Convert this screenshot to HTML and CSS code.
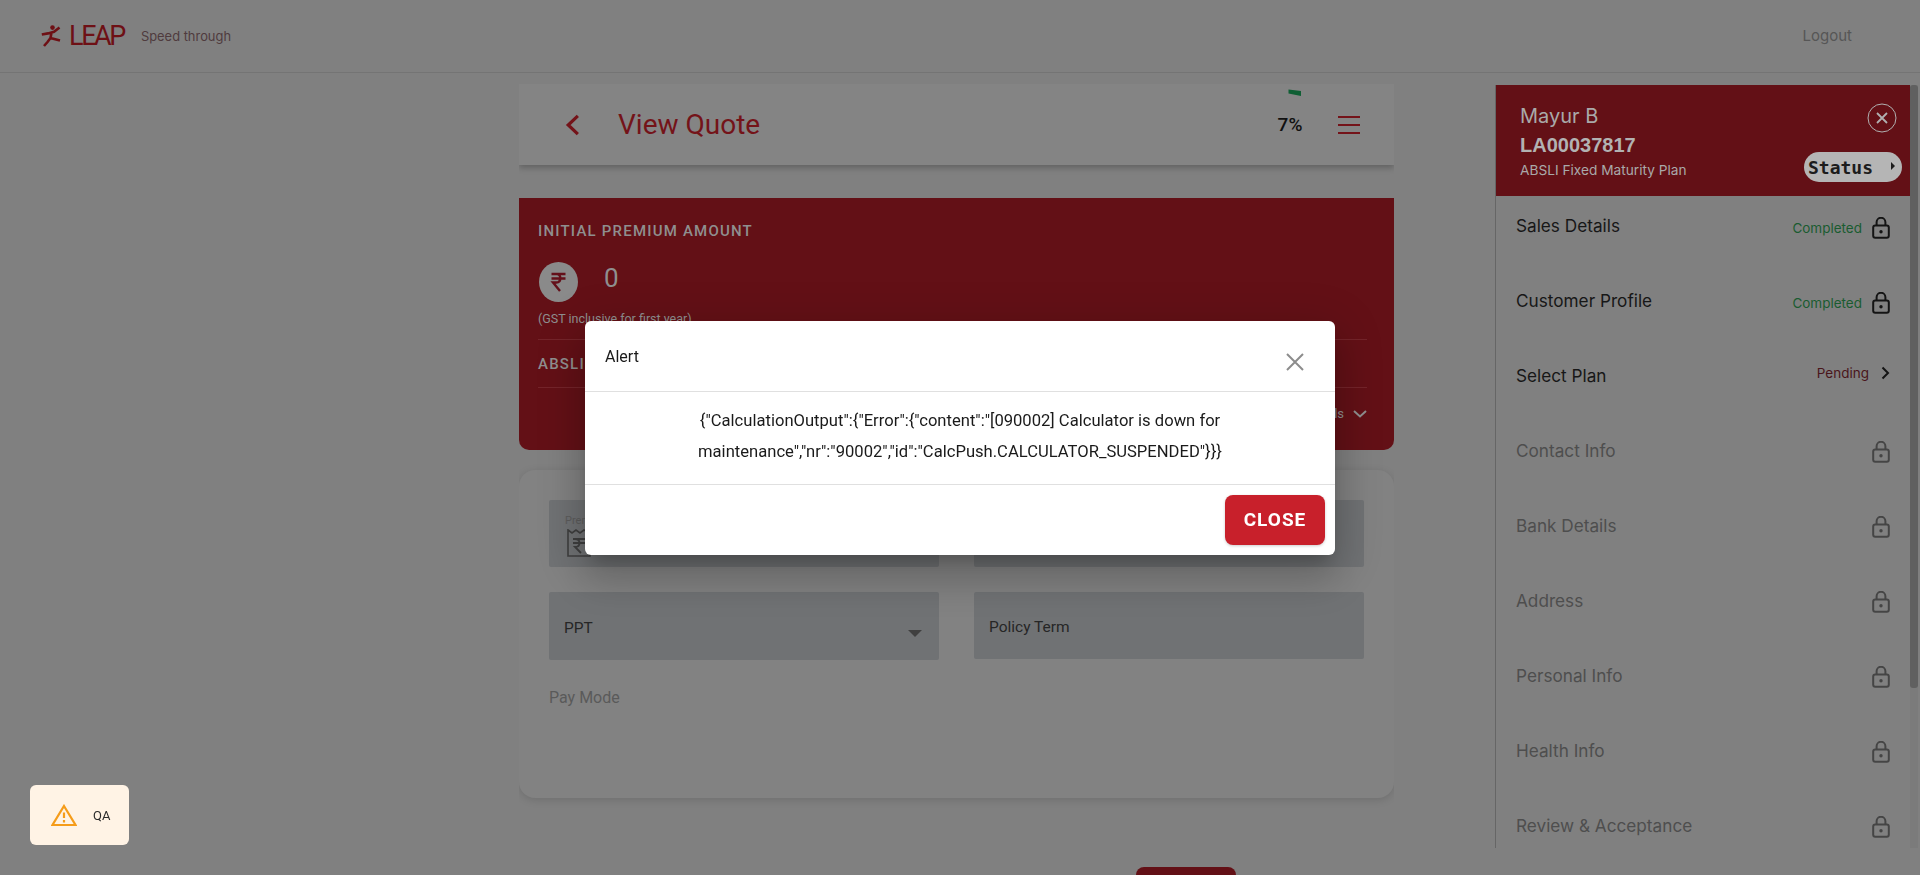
FILE: index.html
```html
<!DOCTYPE html>
<html lang="en">
<head>
  <meta charset="UTF-8" />
  <meta name="viewport" content="width=device-width, initial-scale=1" />
  <title>LEAP - View Quote</title>
  <link rel="stylesheet" href="styles.css">
</head>
<body>
  <svg class="defs" width="0" height="0">
    <symbol id="lock" viewBox="0 0 18 22">
      <rect x="1.2" y="8.6" width="15.6" height="12.2" rx="2" fill="none" stroke="currentColor" stroke-width="2"/>
      <path d="M4.6 8.6V5.2a4.4 4.4 0 0 1 8.8 0v3.4" fill="none" stroke="currentColor" stroke-width="2"/>
      <circle cx="9" cy="14.8" r="1.7" fill="currentColor"/>
    </symbol>
  </svg>

  <header class="topbar">
    <div class="brand">
      <svg class="brand-icon" viewBox="0 0 20 22" width="20" height="22">
        <circle cx="11.5" cy="2.6" r="2.3" fill="#6e1015"/>
        <path d="M0.8 9.5 L7 8.4 L13 6.8 L18.5 2.5 M10.5 7.5 L9.5 13 L19 15.5 M9.5 13 L6.5 17 L3 21" fill="none" stroke="#6e1015" stroke-width="2.6"/>
      </svg>
      <span class="brand-name">LEAP</span>
      <span class="brand-tag">Speed through</span>
    </div>
    <span class="logout">Logout</span>
  </header>

  <div class="workspace">
    <main class="content">
      <section class="quote-head">
        <svg class="back" viewBox="0 0 14 20" width="15" height="22">
          <path d="M12 1.5 L3 10 L12 18.5" fill="none" stroke="#741319" stroke-width="3"/>
        </svg>
        <h1 class="quote-title">View Quote</h1>
        <div class="progress">
          <svg class="progress-arc" viewBox="0 0 14 8" width="14" height="8">
            <path d="M0.5 0.5 L13 2 L13 7 L0.5 4.5 Z" fill="#0f5f34"/>
          </svg>
          <span class="progress-value">7%</span>
        </div>
        <div class="menu"><span></span><span></span><span></span></div>
      </section>

      <section class="premium">
        <div class="premium-label">INITIAL PREMIUM AMOUNT</div>
        <div class="premium-amount">
          <div class="rupee">
            <svg viewBox="0 0 16 20" width="17" height="20">
              <path d="M1 2 H15 M1 6.5 H15 M3 2 H6.5 C11 2 11 10.5 6 10.5 H2.5 L9.5 19" fill="none" stroke="#64101a" stroke-width="2.4"/>
            </svg>
          </div>
          <span class="premium-value">0</span>
        </div>
        <div class="premium-note">(GST inclusive for first year)</div>
        <div class="premium-plan">ABSLI</div>
        <div class="premium-more">
          <span>View Details</span>
          <svg viewBox="0 0 14 8" width="14" height="8">
            <path d="M1 1 L7 6.5 L13 1" fill="none" stroke="#8f8f8f" stroke-width="2"/>
          </svg>
        </div>
      </section>

      <section class="form-card">
        <div class="field-row">
          <div class="field field-premium">
            <span class="field-mini">Premium</span>
            <svg class="receipt" viewBox="0 0 24 28" width="24" height="28">
              <path d="M1 1 L5 4 L9 1 L13 4 L17 1 L23 4 V27 H1 Z" fill="none" stroke="#3f3f3f" stroke-width="1.6"/>
              <path d="M6 10 H18 M6 14 H18 M8 10 C14 10 14 18 8 18 L14 24" fill="none" stroke="#3f3f3f" stroke-width="1.8"/>
            </svg>
          </div>
          <div class="field"></div>
        </div>
        <div class="field-row">
          <div class="field field-select">
            <span class="field-label">PPT</span>
            <span class="caret"></span>
          </div>
          <div class="field field-term">
            <span class="field-label">Policy Term</span>
          </div>
        </div>
        <div class="pay-mode">Pay Mode</div>
      </section>

      <button class="submit" type="button"></button>
    </main>

    <aside class="sidebar">
      <div class="side-main">
        <div class="lead">
          <div class="lead-name">Mayur B</div>
          <div class="lead-id">LA00037817</div>
          <div class="lead-plan">ABSLI Fixed Maturity Plan</div>
          <svg class="lead-close" viewBox="0 0 30 30" width="30" height="30">
            <circle cx="15" cy="15" r="14" fill="none" stroke="#b0b0b0" stroke-width="1"/>
            <path d="M10 10 L20 20 M20 10 L10 20" fill="none" stroke="#b0b0b0" stroke-width="1.8"/>
          </svg>
          <div class="status-pill">
            <span>Status</span>
            <i class="status-arrow"></i>
          </div>
        </div>
        <ul class="steps">
          <li class="step">
            <span class="step-name">Sales Details</span>
            <span class="step-state done">Completed
              <svg class="lock" width="18" height="22"><use href="#lock"/></svg>
            </span>
          </li>
          <li class="step">
            <span class="step-name">Customer Profile</span>
            <span class="step-state done">Completed
              <svg class="lock" width="18" height="22"><use href="#lock"/></svg>
            </span>
          </li>
          <li class="step">
            <span class="step-name">Select Plan</span>
            <span class="step-state pending">Pending
              <svg class="chevron" viewBox="0 0 9 14" width="9" height="14">
                <path d="M1.5 1.5 L7 7 L1.5 12.5" fill="none" stroke="#141414" stroke-width="2"/>
              </svg>
            </span>
          </li>
          <li class="step locked">
            <span class="step-name">Contact Info</span>
            <span class="step-state"><svg class="lock" width="18" height="22"><use href="#lock"/></svg></span>
          </li>
          <li class="step locked">
            <span class="step-name">Bank Details</span>
            <span class="step-state"><svg class="lock" width="18" height="22"><use href="#lock"/></svg></span>
          </li>
          <li class="step locked">
            <span class="step-name">Address</span>
            <span class="step-state"><svg class="lock" width="18" height="22"><use href="#lock"/></svg></span>
          </li>
          <li class="step locked">
            <span class="step-name">Personal Info</span>
            <span class="step-state"><svg class="lock" width="18" height="22"><use href="#lock"/></svg></span>
          </li>
          <li class="step locked">
            <span class="step-name">Health Info</span>
            <span class="step-state"><svg class="lock" width="18" height="22"><use href="#lock"/></svg></span>
          </li>
          <li class="step locked">
            <span class="step-name">Review &amp; Acceptance</span>
            <span class="step-state"><svg class="lock" width="18" height="22"><use href="#lock"/></svg></span>
          </li>
        </ul>
      </div>
      <div class="scroll-track"><div class="scroll-thumb"></div></div>
    </aside>
  </div>

  <!-- Alert dialog -->
  <div class="dialog-wrap">
    <div class="dialog">
      <div class="dialog-head">
        <span class="dialog-title">Alert</span>
        <svg class="dialog-x" viewBox="0 0 20 20" width="20" height="20">
          <path d="M2 2 L18 18 M18 2 L2 18" fill="none" stroke="#8c8c8c" stroke-width="2"/>
        </svg>
      </div>
      <div class="dialog-body">{"CalculationOutput":{"Error":{"content":"[090002] Calculator is down for maintenance","nr":"90002","id":"CalcPush.CALCULATOR_SUSPENDED"}}}</div>
      <div class="dialog-foot">
        <button class="dialog-close" type="button">CLOSE</button>
      </div>
    </div>
  </div>

  <div class="env-toast">
    <svg viewBox="0 0 26 22" width="26" height="22">
      <path d="M13 2 L24.5 21 H1.5 Z" fill="none" stroke="#f59c1a" stroke-width="2.2"/>
      <path d="M13 8.5 V14 M13 16 V18.5" fill="none" stroke="#f59c1a" stroke-width="2.2"/>
    </svg>
    <span>QA</span>
  </div>
</body>
</html>
```

FILE: styles.css
```css
* {
  box-sizing: border-box;
}

html, body {
  margin: 0;
  height: 100%;
  overflow: hidden;
}

body {
  background: #808080;
  font-family: Roboto, sans-serif;
  color: #141414;
}

.defs {
  display: block;
  height: 0;
}

/* Top bar */
.topbar {
  height: 73px;
  border-bottom: 1px solid #747474;
  display: flex;
  align-items: center;
  justify-content: space-between;
  padding: 0 68px 0 41px;
}

.brand {
  display: flex;
  align-items: center;
}

.brand-icon {
  margin-right: 8px;
}

.brand-name {
  font-family: Roboto, sans-serif;
  font-size: 27px;
  font-weight: 400;
  letter-spacing: -2.4px;
  color: #6e1015;
  margin-right: 17px;
}

.brand-tag {
  font-family: Inter, sans-serif;
  font-size: 12.9px;
  color: #4f3b3e;
}

.logout {
  font-family: Inter, sans-serif;
  font-size: 15px;
  color: #565656;
  margin-top: -1px;
}

/* Two columns under the top bar */
.workspace {
  display: flex;
  height: 802px;
  padding-left: 519px;
  padding-top: 11px;
}

.content {
  width: 875px;
  height: 791px;
  overflow: hidden;
  flex-shrink: 0;
}

.quote-head {
  height: 81px;
  display: flex;
  align-items: center;
  background: #848484;
  box-shadow: 0 3px 6px rgba(0,0,0,0.24);
  padding: 0 34px 0 46px;
}

.back {
  margin-right: 38px;
}

.quote-title {
  margin: 0;
  font-size: 28px;
  font-weight: 400;
  color: #741319;
  flex-grow: 1;
}

.progress {
  width: 28px;
  margin-right: 34px;
  position: relative;
  text-align: center;
}

.progress-arc {
  position: absolute;
  top: -24px;
  left: 12px;
}

.progress-value {
  font-size: 19px;
  font-weight: 500;
  color: #111;
}

.menu {
  width: 22px;
  display: flex;
  flex-direction: column;
  gap: 6px;
}

.menu span {
  height: 2px;
  background: #741319;
}

.premium {
  margin-top: 33px;
  height: 252px;
  background: #631016;
  border-radius: 0 0 10px 10px;
  padding: 23px 27px 0 19px;
  color: #8f8f8f;
}

.premium-label {
  font-size: 15px;
  font-weight: 500;
  letter-spacing: 1.2px;
  line-height: 20px;
}

.premium-amount {
  display: flex;
  margin-top: 21px;
  padding-left: 1px;
}

.rupee {
  width: 39px;
  height: 40px;
  border-radius: 50%;
  background: #8a8a8a;
  display: flex;
  align-items: center;
  justify-content: center;
}

.premium-value {
  font-size: 26px;
  line-height: 32px;
  margin-left: 26px;
}

.premium-note {
  font-size: 12.5px;
  line-height: 16px;
  margin-top: 9px;
  padding-bottom: 12px;
  border-bottom: 1px solid #74242a;
}

.premium-plan {
  font-size: 15px;
  font-weight: 500;
  letter-spacing: 1.2px;
  line-height: 20px;
  padding: 14px 0 13px;
  border-bottom: 1px solid #74242a;
}

.premium-more {
  display: flex;
  align-items: center;
  justify-content: flex-end;
  gap: 9px;
  font-size: 13px;
  margin-top: 18px;
}

.form-card {
  margin-top: 20px;
  height: 328px;
  border-radius: 16px;
  background: #828282;
  box-shadow: 0 2px 8px rgba(0,0,0,0.14);
  padding: 30px 30px 0;
}

.field-row {
  display: flex;
  gap: 35px;
  margin-bottom: 25px;
}

.field {
  width: 390px;
  height: 67px;
  background: #707274;
  border-radius: 2px;
}

.field-premium {
  position: relative;
}

.field-mini {
  display: block;
  font-size: 11px;
  color: #5c5c5c;
  padding: 14px 0 0 16px;
}

.receipt {
  position: absolute;
  left: 18px;
  top: 29px;
}

.field-select, .field-term {
  display: flex;
  align-items: center;
  justify-content: space-between;
  padding: 0 17px 0 15px;
}

.field-select {
  height: 68px;
}

.field-label {
  font-size: 15.5px;
  color: #262626;
  margin-top: 3px;
}

.caret {
  margin-top: 14px;
  border-left: 7px solid transparent;
  border-right: 7px solid transparent;
  border-top: 7px solid #404040;
}

.pay-mode {
  font-size: 16px;
  color: #5a5a5a;
  padding-top: 3px;
}

.submit {
  display: block;
  margin: 69px 0 0 617px;
  width: 100px;
  height: 50px;
  border: none;
  border-radius: 8px;
  background: #631016;
}

/* Right hand steps panel */
.sidebar {
  margin-left: 101px;
  width: 423px;
  height: 763px;
  margin-top: 1px;
  display: flex;
  flex-shrink: 0;
  border-left: 1px solid #666;
  margin-right: 2px;
}

.side-main {
  width: 414px;
  flex-shrink: 0;
  overflow: hidden;
}

.lead {
  position: relative;
  height: 111px;
  background: #631016;
  padding: 19px 0 0 24px;
  color: #a9a9a9;
}

.lead-name {
  font-family: Inter, sans-serif;
  font-size: 20px;
  line-height: 24px;
}

.lead-id {
  font-family: "Liberation Sans", sans-serif;
  font-size: 20px;
  font-weight: 700;
  line-height: 24px;
  margin-top: 5px;
  color: #b2b2b2;
}

.lead-plan {
  font-family: Inter, sans-serif;
  font-size: 13.7px;
  line-height: 18px;
  margin-top: 4px;
}

.lead-close {
  position: absolute;
  top: 18px;
  right: 13px;
}

.status-pill {
  position: absolute;
  top: 67px;
  right: 8px;
  width: 98px;
  height: 30px;
  border-radius: 15px;
  background: #b5b5b5;
  display: flex;
  align-items: center;
  justify-content: space-between;
  padding: 0 7px 0 4px;
  font-family: "DejaVu Sans Mono", monospace;
  font-size: 18px;
  font-weight: 700;
  color: #1c1c1c;
}

.status-arrow {
  border-top: 4px solid transparent;
  border-bottom: 4px solid transparent;
  border-left: 4px solid #1c1c1c;
  margin-top: -2px;
}

.steps {
  list-style: none;
  margin: 0;
  padding: 0;
}

.step {
  height: 75px;
  padding: 18px 20px 0;
  display: flex;
  justify-content: space-between;
  align-items: flex-start;
}

.step-name {
  font-family: Inter, sans-serif;
  font-size: 17.2px;
  line-height: 24px;
  color: #171717;
}

.step-state {
  display: flex;
  align-items: center;
  gap: 10px;
  margin-top: 1px;
  font-family: Inter, sans-serif;
  font-size: 13.5px;
}

.step-state.done {
  color: #1a5c30;
  margin-top: 2px;
}

.step-state.pending {
  color: #4a161b;
  gap: 12px;
  margin-top: 1px;
}

.step-state .lock {
  margin-top: 1px;
  color: #141414;
}

.step.locked .step-name {
  color: #4e4e4e;
}

.step.locked .lock {
  color: #454545;
}

.scroll-track {
  width: 8px;
  background: #7b7b7b;
}

.scroll-thumb {
  height: 603px;
  background: #606060;
  border-radius: 3px;
}

/* Dialog sits above the whole page */
.dialog-wrap {
  position: fixed;
  top: 0;
  left: 0;
  right: 0;
  bottom: 0;
  display: flex;
  align-items: center;
  justify-content: center;
}

.dialog {
  width: 750px;
  background: #fff;
  border-radius: 6px;
  box-shadow: 0 11px 15px -7px rgba(0,0,0,0.2), 0 24px 38px 3px rgba(0,0,0,0.14), 0 9px 46px 8px rgba(0,0,0,0.12);
}

.dialog-head {
  height: 71px;
  border-bottom: 1px solid #e0e0e0;
  display: flex;
  justify-content: space-between;
  padding: 25px 30px 0 20px;
}

.dialog-title {
  font-size: 16px;
  line-height: 22px;
  color: #1a1a1a;
}

.dialog-x {
  margin-top: 6px;
}

.dialog-body {
  height: 93px;
  border-bottom: 1px solid #e0e0e0;
  padding: 13px 100px;
  text-align: center;
  font-size: 16.6px;
  line-height: 31px;
  color: #1a1a1a;
}

.dialog-foot {
  height: 70px;
  display: flex;
  justify-content: flex-end;
  align-items: center;
  padding-right: 10px;
}

.dialog-close {
  width: 100px;
  height: 50px;
  border: none;
  border-radius: 8px;
  background: #c8202b;
  color: #fff;
  font-family: Roboto, sans-serif;
  font-size: 19px;
  font-weight: 700;
  letter-spacing: 1px;
  box-shadow: 0 1px 3px rgba(0,0,0,0.2);
}

.env-toast {
  position: fixed;
  left: 30px;
  top: 785px;
  width: 99px;
  height: 60px;
  border-radius: 6px;
  background: #fff3e5;
  display: flex;
  align-items: center;
  gap: 16px;
  padding-left: 21px;
  font-size: 13px;
  color: #2a2a2a;
}
```
